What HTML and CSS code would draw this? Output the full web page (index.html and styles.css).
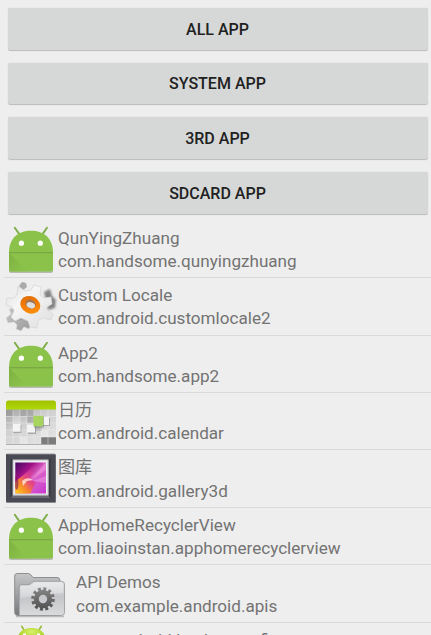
FILE: index.html
```
<!DOCTYPE html>
<html lang="zh">
<head>
<meta charset="utf-8">
<title>Apps</title>
<link rel="stylesheet" href="styles.css">
</head>
<body>
<svg class="defs" width="0" height="0" aria-hidden="true">
  <defs>
    <linearGradient id="fold" x1="0" y1="0" x2="1" y2="1"><stop offset="0" stop-color="#74a53b"/><stop offset=".9" stop-color="#8bc34a"/></linearGradient>
    <linearGradient id="metal" x1="0" y1="0" x2="1" y2="1"><stop offset="0" stop-color="#dcdcdc"/><stop offset=".35" stop-color="#f6f6f6"/><stop offset="1" stop-color="#dedede"/></linearGradient>
    <linearGradient id="darkmetal" x1="0" y1="0" x2="1" y2="1"><stop offset="0" stop-color="#c8c8c8"/><stop offset="1" stop-color="#9a9a9a"/></linearGradient>
    <linearGradient id="orange" x1="0" y1="0" x2="1" y2="1"><stop offset="0" stop-color="#d96a0c"/><stop offset=".5" stop-color="#f57c05"/><stop offset="1" stop-color="#ff980e"/></linearGradient>
    <linearGradient id="lime" x1="0" y1="0" x2="0" y2="1"><stop offset="0" stop-color="#a0c000"/><stop offset="1" stop-color="#b0d80a"/></linearGradient>
    <linearGradient id="tiles" x1="0" y1="0" x2=".7" y2="1"><stop offset="0" stop-color="#a2a2a2"/><stop offset=".45" stop-color="#d0d0d0"/><stop offset="1" stop-color="#e2e2e2"/></linearGradient>
    <linearGradient id="photo" x1="0" y1="0" x2="1" y2="1"><stop offset="0" stop-color="#39085e"/><stop offset=".3" stop-color="#a00f86"/><stop offset=".52" stop-color="#dc66c8"/><stop offset="1" stop-color="#c535d0"/></linearGradient>
    <linearGradient id="flame" x1="0" y1="1" x2="1" y2="0"><stop offset="0" stop-color="#ffd51c"/><stop offset=".25" stop-color="#f88b28"/><stop offset=".45" stop-color="#e54384"/><stop offset=".8" stop-color="#c935a0" stop-opacity="0"/></linearGradient>
    <linearGradient id="folder" x1="0" y1="0" x2="0" y2="1"><stop offset="0" stop-color="#e2e3e5"/><stop offset=".45" stop-color="#c3c5c8"/><stop offset="1" stop-color="#dadbdc"/></linearGradient>
    <linearGradient id="folderback" x1="0" y1="0" x2="0" y2="1"><stop offset="0" stop-color="#c5c6c8"/><stop offset="1" stop-color="#77797c"/></linearGradient>
    <linearGradient id="cog" gradientUnits="userSpaceOnUse" x1="0" y1="-12" x2="0" y2="12"><stop offset="0" stop-color="#898989"/><stop offset="1" stop-color="#4c4c4c"/></linearGradient>
    <radialGradient id="ball" cx=".5" cy=".25" r=".6"><stop offset="0" stop-color="#d9f06c"/><stop offset="1" stop-color="#9fcc18"/></radialGradient>
    <filter id="soft" x="-20%" y="-20%" width="140%" height="140%"><feGaussianBlur stdDeviation="1"/></filter>
    <clipPath id="photoclip"><rect x="15.3" y="12.6" width="30.7" height="31"/></clipPath>
    <g id="droid">
      <path d="M9 49.500v1q0 1.400 2 1.400h40q2 0 2-1.400v-1z" fill="#9aa092" opacity=".65"/>
      <path d="M14.800 6.700l5 7.200M47 6.700l-5 7.200" stroke="#80ae4b" stroke-width="2" stroke-linecap="round"/>
      <path d="M9 31.500C9 17.500 18 9.800 31 9.800S53 17.500 53 31.500v17q0 2-2 2H11q-2 0-2-2z" fill="#8bc34a"/>
      <path d="M9 31.300h44v1H9z" fill="#749f45"/>
      <path d="M9.500 32.300l18.200 18.200H11q-2 0-2-2V32.300z" fill="url(#fold)" opacity=".6"/>
      <circle cx="21.400" cy="22.200" r="2.600" fill="#fff"/><circle cx="40.300" cy="22.200" r="2.600" fill="#fff"/>
    </g>
  </defs>
</svg>
<main class="screen">
  <div class="actions">
    <button class="action">ALL APP</button>
    <button class="action">SYSTEM APP</button>
    <button class="action">3RD APP</button>
    <button class="action">SDCARD APP</button>
  </div>
  <ul class="apps">
    <li class="app">
      <svg class="icon" viewBox="4 0 54 57"><use href="#droid"/></svg>
      <div class="label"><p>QunYingZhuang</p><p>com.handsome.qunyingzhuang</p></div>
    </li>
    <li class="app">
      <svg class="icon" viewBox="4 0 54 57">
        <path d="M44 14l6-3 2 7 4 4-1 8-7 2z" fill="#555" opacity=".7" filter="url(#soft)"/>
        <path d="M19 8l3-4 4 1 1 4-5 4z" fill="#aaa"/>
        <path d="M9 31l2 5-5 4 2 5 6-1 3 3-1 4 5 2 3-4 5 2 2-4-2-7-14-10z" fill="url(#darkmetal)" stroke="#ddd" stroke-width=".7"/>
        <path d="M11 30l6 5 2 7 7-3 8 5-2-9z" fill="#666" opacity=".5" filter="url(#soft)"/>
        <path d="M18 8l7 5 6-1 3-5 7 2-1 8 4 3 7-1 1 7-5 3-1 2 7 5-2 6-9-2-4 3-1 7-7-1-2-6-7-3-6 3-4-4 3-6-2-4-6-2 1-7h7l3-4z" fill="url(#metal)" stroke="#d4d4d4" stroke-width=".7" stroke-linejoin="round"/>
        <ellipse cx="30.300" cy="26.800" rx="10.300" ry="8.500" transform="rotate(25 30.300 26.800)" fill="url(#orange)"/>
        <ellipse cx="30.600" cy="26.200" rx="5.300" ry="4.400" transform="rotate(25 30.600 26.200)" fill="#a27355"/>
        <ellipse cx="30.800" cy="27.300" rx="4.400" ry="2.900" transform="rotate(20 30.800 27.300)" fill="#dedede"/>
      </svg>
      <div class="label"><p>Custom Locale</p><p>com.android.customlocale2</p></div>
    </li>
    <li class="app">
      <svg class="icon" viewBox="4 0 54 57"><use href="#droid"/></svg>
      <div class="label"><p>App2</p><p>com.handsome.app2</p></div>
    </li>
    <li class="app">
      <svg class="icon" viewBox="4 0 54 57">
        <rect x="6" y="16" width="50" height="35.300" fill="url(#tiles)"/>
        <path d="M6 17h7v6H6zM20 17h7v6h-7zM27 17h7v7h-7z" fill="#888" opacity=".4"/>
        <path d="M27 23h7v7h-7zM34 34h8v4h-8z" fill="#8c8c8c" opacity=".5"/>
        <path d="M20 44h7v7h-7zM13 24h7v7h-7zM41 37h7v7h-7z" fill="#fff" opacity=".3"/>
        <path d="M41 44h15v7.300H41z" fill="#7c7c7c"/>
        <path d="M13 17v34M20 17v34M27 17v34M34 17v34M41 17v34M48 17v34M6 23.500h50M6 30h50M6 37h50M6 44h50" stroke="#f2f2f2" stroke-width=".6" opacity=".75"/>
        <path d="M6 10q0-2.500 2-2.500h46q2 0 2 2.500v6.500H6z" fill="url(#lime)"/>
        <path d="M13.300 32h8v8h-8zM28 33h8v8h-8zM42 25h8v8h-8z" fill="#777" opacity=".5"/>
        <path d="M13 31h7.500v7.800H13zM27 31.500h8v8h-8zM42 24h7v8h-7z" fill="#f4f4f4"/>
        <rect x="34" y="23.500" width="10" height="11" fill="#666" opacity=".5"/>
        <rect x="33.400" y="22.800" width="9.800" height="10.500" fill="#a7d45d"/>
        <path d="M6 51.500h50" stroke="#999" stroke-width=".7"/>
      </svg>
      <div class="label"><p>日历</p><p>com.android.calendar</p></div>
    </li>
    <li class="app">
      <svg class="icon" viewBox="4 0 54 57">
        <rect x="6" y="4.500" width="50" height="48.500" rx="1" fill="#8b8b90"/>
        <rect x="6" y="3.700" width="49.500" height="48.300" rx="1" fill="#494a54"/>
        <path d="M7 4.500h48" stroke="#696a72"/>
        <rect x="10.500" y="9" width="40" height="39" fill="#35363f"/>
        <path d="M10.500 48l3-3.500h34l3 3.500z" fill="#686973"/>
        <rect x="12.600" y="9.500" width="36" height="36" fill="#d7d8dc"/>
        <rect x="14" y="11" width="33" height="33" fill="#f0eef2"/>
        <g clip-path="url(#photoclip)">
          <rect x="15" y="12" width="32" height="32" fill="url(#photo)"/>
          <path d="M15 32L39 12h5L29 29l7 3-6 12H15z" fill="url(#flame)"/>
          <path d="M15 38V25q5 4 3 13l-1 2z" fill="#7b1458" opacity=".6"/>
          <path d="M22 31q5-5 11-1l-6 1-4 5z" fill="#ffe0d0" opacity=".85"/>
          <path d="M32 29L46 12v8zM33 31l13-5v7z" fill="#f5a6e4" opacity=".45"/>
        </g>
      </svg>
      <div class="label"><p>图库</p><p>com.android.gallery3d</p></div>
    </li>
    <li class="app">
      <svg class="icon" viewBox="4 0 54 57"><use href="#droid"/></svg>
      <div class="label"><p>AppHomeRecyclerView</p><p>com.liaoinstan.apphomerecyclerview</p></div>
    </li>
    <li class="app">
      <svg class="icon icon-wide" viewBox="4 0 72 57">
        <path d="M16 51.500h48" stroke="#999" stroke-width="1.500" opacity=".6"/>
        <path d="M14.700 47.500V11q0-2.500 2.500-2.500h11q1.700 0 2.800 1.500l2 2.500h24q3 0 3 3V47.500q0 3-3 3H18q-3.300 0-3.300-3z" fill="url(#folderback)" stroke="#8d8f91"/>
        <path d="M19.200 50.500V22q0-2.300 2.300-2.300H28q2 0 3.500-1.700t3.500-1.700h26.500q3 0 3 3V47.500q0 3-3 3z" fill="url(#folder)" stroke="#949698" stroke-width=".8"/>
        <path d="M20.500 33V22.500q0-1.500 1.500-1.500h7q2 0 3.500-1.700t3.500-1.700h25q2 0 2 2V28q-20 1-42.500 5z" fill="#fff" opacity=".3"/>
        <g transform="translate(43 34)" fill="none" stroke="url(#cog)">
          <circle r="6.700" stroke-width="5"/>
          <circle r="10.200" stroke-width="3.200" stroke-dasharray="2.900 2.440"/>
        </g>
      </svg>
      <div class="label"><p>API Demos</p><p>com.example.android.apis</p></div>
    </li>
    <li class="app">
      <svg class="icon icon-wide" viewBox="4 0 72 57">
        <path d="M21.800 3.300l3 5M41.200 3.300l-3 5" stroke="#93b82b" stroke-width="1.600" stroke-linecap="round"/>
        <path d="M17 20C17 10 22 5 31.500 5S46 10 46 20z" fill="url(#ball)"/>
        <circle cx="24.500" cy="12" r="1.700" fill="#fff"/><circle cx="38.500" cy="12" r="1.700" fill="#fff"/>
      </svg>
      <div class="label"><p>com.android.backupconfirm</p></div>
    </li>
  </ul>
</main>
</body>
</html>
```
FILE: styles.css
```
* { box-sizing: border-box; }
body {
  margin: 0;
  background: #eee;
  color: #737373;
  font-family: Roboto, "Noto Sans CJK SC", sans-serif;
  overflow: hidden;
}
.defs { display: block; height: 0; }
.screen { height: 635px; overflow: hidden; }
.actions {
  display: flex;
  flex-direction: column;
  gap: 13.2px;
  padding: 8px 3.5px 0 7.5px;
}
.action {
  height: 41.5px;
  flex: none;
  border: 0;
  border-radius: 2.5px;
  padding: 2px 0 0;
  background: #d6d8d7;
  box-shadow: 0 .5px 1px rgba(0, 0, 0, .22);
  color: #212121;
  font: 500 16px/20px Roboto, sans-serif;
}
.apps {
  list-style: none;
  margin: 7.1px 0 0 4px;
  padding: 0;
}
.app {
  display: flex;
  height: 57.45px;
  border-bottom: 1px solid #dadada;
}
.icon { width: 54px; height: 57px; flex: none; }
.icon-wide { width: 72px; }
.label {
  padding-top: 6px;
  font-size: 17.1px;
  line-height: 23.3px;
  white-space: nowrap;
}
.label p { margin: 0; height: 23.3px; }
```
